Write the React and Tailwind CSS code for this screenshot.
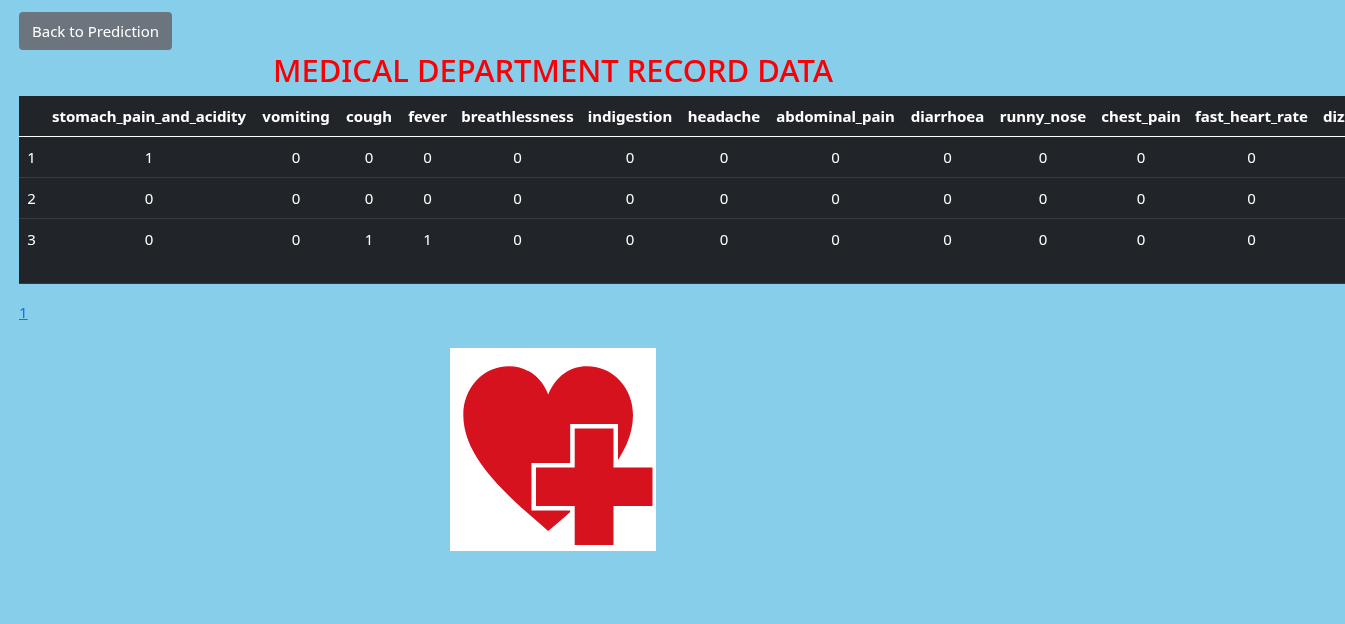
const columns = [
  { name: 'stomach_pain_and_acidity', width: 'w-[210px]' },
  { name: 'vomiting', width: 'w-[84px]' },
  { name: 'cough', width: 'w-[62px]' },
  { name: 'fever', width: 'w-[55px]' },
  { name: 'breathlessness', width: 'w-[125px]' },
  { name: 'indigestion', width: 'w-[100px]' },
  { name: 'headache', width: 'w-[88px]' },
  { name: 'abdominal_pain', width: 'w-[135px]' },
  { name: 'diarrhoea', width: 'w-[89px]' },
  { name: 'runny_nose', width: 'w-[102px]' },
  { name: 'chest_pain', width: 'w-[94px]' },
  { name: 'fast_heart_rate', width: 'w-[127px]' },
  { name: 'dizziness', width: 'w-[83px]' },
];

const records = [
  { id: 1, values: [1, 0, 0, 0, 0, 0, 0, 0, 0, 0, 0, 0, 0] },
  { id: 2, values: [0, 0, 0, 0, 0, 0, 0, 0, 0, 0, 0, 0, 0] },
  { id: 3, values: [0, 0, 1, 1, 0, 0, 0, 0, 0, 0, 0, 0, 0] },
];

function HeartCross() {
  return (
    <svg width="206" height="203" viewBox="0 0 206 203" role="img" aria-label="Heart with medical cross">
      <rect width="206" height="203" fill="#fff" />
      <path
        d="M98.2 46.5C91 28 76 18.3 59 18.3C33 18.3 13.3 40 13.3 67C13.3 107 50 142 98.2 183C147 142 183 107 183 67C183 40 163 18.3 137 18.3C120 18.3 106 28 98.2 46.5Z"
        fill="#d5121e"
      />
      <path
        d="M124.7 80.5H163.5V119.5H202.5V158H163.5V197H124.7V158H86V119.5H124.7Z"
        fill="#d5121e"
        stroke="#fff"
        strokeWidth="9"
        paintOrder="stroke"
      />
    </svg>
  );
}

function RecordTable() {
  return (
    <div className="mb-4 overflow-x-auto [scrollbar-width:none]">
      <table className="w-max min-w-full table-fixed border-collapse bg-[#212529] text-center leading-6 text-white">
        <thead>
          <tr className="border-b border-white text-[15px]">
            <td className="w-[25px] p-2" />
            {columns.map((column) => (
              <th key={column.name} scope="col" className={`${column.width} py-2 font-bold whitespace-nowrap`}>
                {column.name}
              </th>
            ))}
          </tr>
        </thead>
        <tbody>
          {records.map((record) => (
            <tr key={record.id} className="border-b border-[#373b3e] align-top text-[15px] last:h-[65px]">
              <th scope="row" className="p-2 font-normal">
                {record.id}
              </th>
              {record.values.map((value, index) => (
                <td key={columns[index].name} className="p-2">
                  {value}
                </td>
              ))}
            </tr>
          ))}
        </tbody>
      </table>
    </div>
  );
}

export default function App() {
  return (
    <div className="min-h-screen bg-[#87ceeb] pt-3 pl-[19px] font-['Noto_Sans',sans-serif] text-[15px]">
      <button type="button" className="block h-[38px] rounded bg-[#6c757d] px-[13px] leading-6 text-white">
        Back to Prediction
      </button>
      <h2 className="max-w-[1068px] pb-[6px] text-center text-[31px] leading-10 font-medium text-[#fa0005]">
        MEDICAL DEPARTMENT RECORD DATA
      </h2>
      <RecordTable />
      <nav aria-label="Pages" className="leading-6">
        <a href="#page-1" className="text-[#0d6efd] underline">
          1
        </a>
      </nav>
      <div className="mt-6 flex max-w-[1068px] justify-center">
        <HeartCross />
      </div>
    </div>
  );
}
